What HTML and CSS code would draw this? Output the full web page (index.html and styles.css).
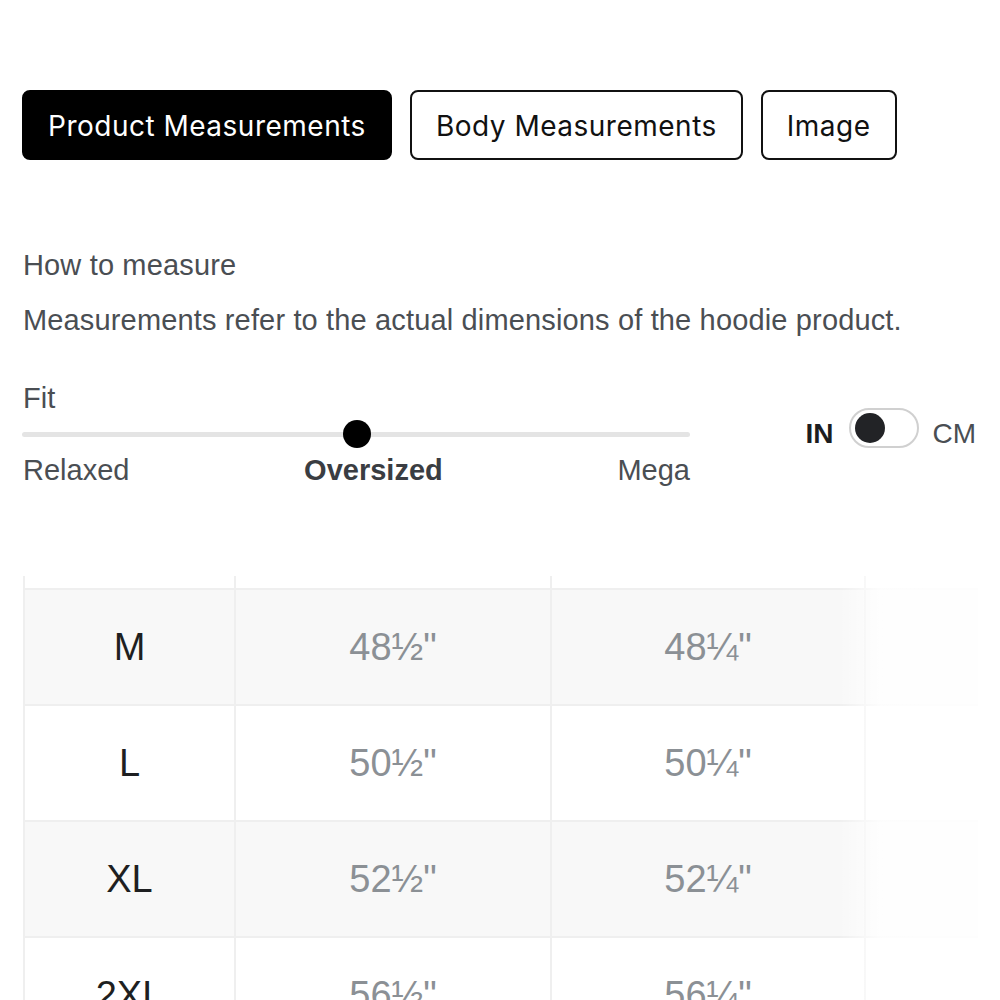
FILE: index.html
```html
<!DOCTYPE html>
<html>
<head>
<meta charset="utf-8">
<link rel="stylesheet" href="styles.css">
</head>
<body>
<div class="page">
  <div class="tabs">
    <button class="tab active">Product Measurements</button>
    <button class="tab">Body Measurements</button>
    <button class="tab">Image</button>
  </div>

  <p class="how">How to measure</p>
  <p class="desc">Measurements refer to the actual dimensions of the hoodie product.</p>

  <div class="fit-row">
    <div class="fit">
      <div class="fit-title">Fit</div>
      <div class="slider">
        <div class="track"></div>
        <div class="knob"></div>
      </div>
      <div class="fit-labels">
        <span>Relaxed</span>
        <span class="sel">Oversized</span>
        <span>Mega</span>
      </div>
    </div>
    <div class="unit">
      <span class="unit-in">IN</span>
      <span class="toggle"><span class="toggle-knob"></span></span>
      <span class="unit-cm">CM</span>
    </div>
  </div>

  <div class="table-wrap">
    <div class="grid">
      <div class="cell stub"></div><div class="cell stub"></div><div class="cell stub"></div><div class="cell stub"></div>

      <div class="cell size alt">M</div><div class="cell val alt">48½"</div><div class="cell val alt">48¼"</div><div class="cell val alt"></div>
      <div class="cell size">L</div><div class="cell val">50½"</div><div class="cell val">50¼"</div><div class="cell val"></div>
      <div class="cell size alt">XL</div><div class="cell val alt">52½"</div><div class="cell val alt">52¼"</div><div class="cell val alt"></div>
      <div class="cell size">2XL</div><div class="cell val">56½"</div><div class="cell val">56¼"</div><div class="cell val"></div>
    </div>
    <div class="fade"></div>
  </div>
</div>
</body>
</html>
```

FILE: styles.css
```css
html, body {
  margin: 0;
  padding: 0;
  background: #fff;
  height: 1000px;
  overflow: hidden;
}

.page {
  padding: 90px 0 0 23px;
  font-family: "Liberation Sans", Arial, sans-serif;
  color: #4a4e53;
}

.tabs {
  display: flex;
  gap: 18px;
  margin-left: -1px;
}

.tab {
  height: 70px;
  padding: 2px 24px 0;
  border: 2px solid #111;
  border-radius: 8px;
  background: #fff;
  color: #111;
  font-family: Inter, "Liberation Sans", sans-serif;
  font-size: 28px;
  font-weight: 400;
  letter-spacing: 0.5px;
}

.tab.active {
  background: #000;
  border-color: #000;
  color: #fff;
}

.how {
  margin: 90px 0 0;
  font-size: 29px;
  line-height: 30px;
  letter-spacing: 0.15px;
}

.desc {
  margin: 25px 0 0;
  font-size: 29px;
  line-height: 30px;
  letter-spacing: 0.15px;
}

.fit-row {
  display: flex;
  align-items: flex-start;
  margin-top: 48px;
}

.fit {
  width: 668px;
  margin-left: -1px;
}

.fit-title {
  font-size: 29px;
  line-height: 30px;
  margin-left: 1px;
}

.slider {
  position: relative;
  height: 42px;
}

.track {
  position: absolute;
  left: 0;
  right: 0;
  top: 19px;
  height: 5px;
  border-radius: 3px;
  background: #e4e4e4;
}

.knob {
  position: absolute;
  left: 50%;
  top: 21px;
  width: 28px;
  height: 28px;
  margin: -14px 0 0 -13px;
  border-radius: 50%;
  background: #000;
}

.fit-labels {
  display: flex;
  justify-content: space-between;
  font-size: 29px;
  line-height: 30px;
  padding-left: 1px;
}

.fit-labels .sel {
  font-weight: 700;
  color: #3a3d42;
}

.unit {
  margin-left: auto;
  margin-right: 24px;
  margin-top: 25px;
  height: 52px;
  display: flex;
  align-items: center;
  font-size: 28px;
}

.unit-in {
  font-weight: 700;
  color: #1c1d1f;
}

.toggle {
  margin: 0 13px 12px 16px;
  width: 62px;
  height: 36px;
  border: 2px solid #d0d0d0;
  border-radius: 20px;
  display: flex;
  align-items: center;
  padding-left: 4px;
}

.toggle-knob {
  width: 30px;
  height: 30px;
  border-radius: 50%;
  background: #222326;
}

.unit-cm {
  color: #4a4e53;
}

.table-wrap {
  position: relative;
  margin-top: 91px;
  width: 955px;
  overflow: hidden;
}

.grid {
  display: grid;
  grid-template-columns: 211px 316px 314px 300px;
  border-left: 2px solid #efefef;
  width: 1141px;
}

.cell {
  border-right: 2px solid #efefef;
  border-bottom: 2px solid #efefef;
  height: 114px;
  display: flex;
  align-items: center;
  justify-content: center;
  font-size: 38px;
}

.cell.stub {
  height: 12px;
}

.cell.alt {
  background: #f8f8f8;
}

.size {
  color: #1e1f21;
}

.val {
  color: #8b9095;
}

.fade {
  position: absolute;
  top: 0;
  right: 0;
  width: 140px;
  height: 100%;
  background: linear-gradient(to right, rgba(255,255,255,0) 0%, rgba(255,255,255,0.85) 30%, rgba(255,255,255,0.9) 100%);
}
```
